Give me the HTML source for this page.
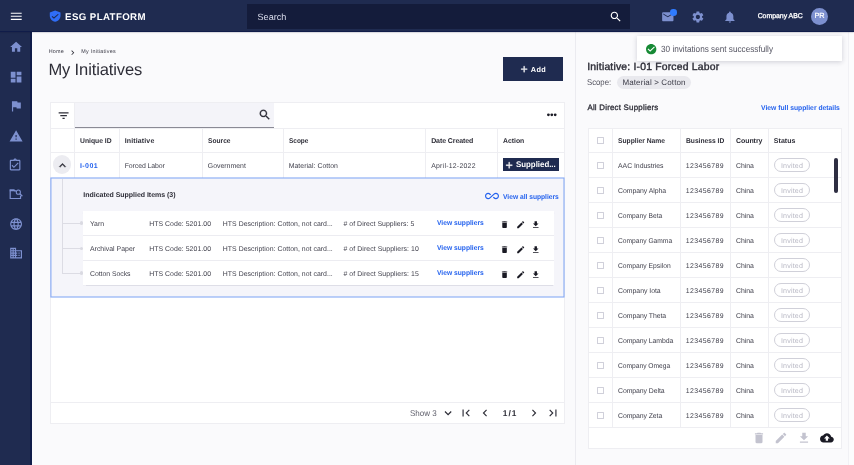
<!DOCTYPE html>
<html lang="en">
<head>
<meta charset="utf-8">
<title>ESG Platform - My Initiatives</title>
<style>
*{box-sizing:border-box;margin:0;padding:0}
html,body{width:854px;height:465px;overflow:hidden;background:#fafafc;font-family:"Liberation Sans",sans-serif;color:#2e2e38}
#app{position:relative;width:854px;height:465px;overflow:hidden;will-change:transform;text-rendering:geometricPrecision}
.a{position:absolute;display:block}
svg.a{overflow:visible}
.t{position:absolute;white-space:nowrap;line-height:1;transform-origin:0 50%}
</style>
</head>
<body>
<div id="app">
<div class="a" style="left:0.00px;top:0.00px;width:854.00px;height:465.00px;background:#fafafc;"></div>
<div class="a" style="left:576.00px;top:32.00px;width:278.00px;height:433.00px;background:#fafafc;"></div>
<div class="a" style="left:575.40px;top:32.00px;width:1.00px;height:433.00px;background:#ebebf0;"></div>
<div class="a" style="left:849.00px;top:32.00px;width:5.00px;height:433.00px;background:#fcfcfd;"></div>
<div class="a" style="left:848.00px;top:32.00px;width:1.00px;height:433.00px;background:#f1f1f5;"></div>
<div class="t" style="left:48.73px;top:49.80px;font-size:5.4px;color:#3c3c48;letter-spacing:0.198px;">Home</div>
<svg class="a" style="left:67.68px;top:47.50px" width="9.40" height="9.40" viewBox="0 0 24 24" fill="#2e2e38"><path d="M10 6L8.590 7.410 13.170 12l-4.580 4.590L10 18l6-6z"/></svg>
<div class="t" style="left:81.33px;top:49.80px;font-size:5.4px;color:#3c3c48;letter-spacing:0.241px;">My Initiatives</div>
<div class="t" style="left:48.38px;top:62.25px;font-size:16.5px;color:#2e2e38;letter-spacing:-0.113px;">My Initiatives</div>
<div class="a" style="left:503.30px;top:57.40px;width:60.20px;height:23.60px;background:#1f2b50;"></div>
<svg class="a" style="left:519.25px;top:64.25px" width="10.30" height="10.30" viewBox="0 0 24 24" fill="#fff" stroke="#fff" stroke-width="0.9"><path d="M19 13h-6v6h-2v-6H5v-2h6V5h2v6h6v2z"/></svg>
<div class="t" style="left:530.74px;top:66.35px;font-size:7.3px;color:#fff;font-weight:bold;letter-spacing:0.385px;">Add</div>
<div class="a" style="left:50.00px;top:102.00px;width:514.50px;height:321.50px;background:#fff;border:1px solid #eeeef2"></div>
<div class="a" style="left:75.00px;top:103.00px;width:199.20px;height:25.00px;background:#f4f4f9;"></div>
<svg class="a" style="left:56.50px;top:109.00px" width="13.20" height="13.20" viewBox="0 0 24 24" fill="#2e2e38"><path d="M10 18h4v-2h-4v2zM3 6v2h18V6H3zm3 7h12v-2H6v2z"/></svg>
<svg class="a" style="left:257.64px;top:107.94px" width="13.60" height="13.60" viewBox="0 0 24 24" fill="#2e2e38" stroke="#2e2e38" stroke-width="0.5"><path d="M15.5 14h-.79l-.28-.27C15.41 12.59 16 11.11 16 9.5 16 5.91 13.09 3 9.5 3S3 5.91 3 9.5 5.91 16 9.5 16c1.610 0 3.090-.590 4.230-1.570l.270.280v.790l5 4.990L20.490 19l-4.990-5zm-6 0C7.010 14 5 11.990 5 9.500S7.010 5 9.500 5 14 7.010 14 9.500 11.990 14 9.500 14z"/></svg>
<svg class="a" style="left:540px;top:108px" width="24" height="14" viewBox="0 0 24 14" fill="#1c1c26"><circle cx="8.4" cy="6.85" r="1.4"/><circle cx="11.8" cy="6.85" r="1.4"/><circle cx="15.2" cy="6.85" r="1.4"/></svg>
<div class="a" style="left:51.00px;top:127.80px;width:513.00px;height:1.00px;background:#eeeef2;"></div>
<div class="a" style="left:51.00px;top:152.20px;width:513.00px;height:1.00px;background:#eeeef2;"></div>
<div class="a" style="left:74.00px;top:103.00px;width:1.00px;height:75.00px;background:#eeeef2;"></div>
<div class="a" style="left:75.00px;top:127.00px;width:199.20px;height:1.00px;background:#8a8a95;"></div>
<div class="a" style="left:119.00px;top:128.00px;width:1.00px;height:50.00px;background:#eeeef2;"></div>
<div class="a" style="left:202.00px;top:128.00px;width:1.00px;height:50.00px;background:#eeeef2;"></div>
<div class="a" style="left:282.90px;top:128.00px;width:1.00px;height:50.00px;background:#eeeef2;"></div>
<div class="a" style="left:425.00px;top:128.00px;width:1.00px;height:50.00px;background:#eeeef2;"></div>
<div class="a" style="left:497.00px;top:128.00px;width:1.00px;height:50.00px;background:#eeeef2;"></div>
<div class="t" style="left:79.96px;top:137.50px;font-size:7px;color:#2e2e38;font-weight:bold;transform:scaleX(0.9681);">Unique ID</div>
<div class="t" style="left:124.75px;top:137.50px;font-size:7px;color:#2e2e38;font-weight:bold;letter-spacing:0.125px;">Initiative</div>
<div class="t" style="left:207.77px;top:137.50px;font-size:7px;color:#2e2e38;font-weight:bold;transform:scaleX(0.9493);">Source</div>
<div class="t" style="left:288.68px;top:137.50px;font-size:7px;color:#2e2e38;font-weight:bold;transform:scaleX(0.9246);">Scope</div>
<div class="t" style="left:431.15px;top:137.50px;font-size:7px;color:#2e2e38;font-weight:bold;letter-spacing:-0.087px;">Date Created</div>
<div class="t" style="left:502.96px;top:137.50px;font-size:7px;color:#2e2e38;font-weight:bold;transform:scaleX(0.9747);">Action</div>
<div class="a" style="left:53.00px;top:155.40px;width:18.40px;height:18.40px;background:#ececf1;border-radius:50%"></div>
<svg class="a" style="left:56.10px;top:158.66px" width="13.00" height="13.00" viewBox="0 0 24 24" fill="#2e2e38" stroke="#2e2e38" stroke-width="0.6"><path d="M12 8l-6 6 1.410 1.410L12 10.830l4.590 4.580L18 14z"/></svg>
<div class="t" style="left:79.95px;top:162.50px;font-size:7px;color:#2462ee;font-weight:bold;letter-spacing:0.440px;">I-001</div>
<div class="t" style="left:124.75px;top:163.55px;font-size:6.9px;color:#40404c;letter-spacing:-0.088px;">Forced Labor</div>
<div class="t" style="left:207.75px;top:163.55px;font-size:6.9px;color:#40404c;letter-spacing:0.022px;">Government</div>
<div class="t" style="left:288.65px;top:163.55px;font-size:6.9px;color:#40404c;letter-spacing:0.045px;">Material: Cotton</div>
<div class="t" style="left:431.15px;top:163.55px;font-size:6.9px;color:#40404c;letter-spacing:0.246px;">April-12-2022</div>
<div class="a" style="left:502.90px;top:158.30px;width:56.00px;height:13.20px;background:#1f2b50;"></div>
<svg class="a" style="left:504.40px;top:159.80px" width="10.40" height="10.40" viewBox="0 0 24 24" fill="#fff" stroke="#fff" stroke-width="0.9"><path d="M19 13h-6v6h-2v-6H5v-2h6V5h2v6h6v2z"/></svg>
<div class="t" style="left:515.81px;top:160.90px;font-size:8.2px;color:#fff;font-weight:bold;transform:scaleX(0.9597);">Supplied...</div>
<div class="a" style="left:51.00px;top:178.00px;width:513.00px;height:119.00px;background:#f5f5fa;"></div>
<svg class="a" style="left:0;top:0" width="854" height="465" fill="none" stroke="#85a9f5" stroke-width="1.1"><rect x="50.9" y="178" width="513.1" height="119"/></svg>
<div class="a" style="left:62.00px;top:178.70px;width:1.00px;height:94.50px;background:#dcdce4;"></div>
<div class="a" style="left:62.00px;top:222.50px;width:19.00px;height:1.00px;background:#dcdce4;"></div>
<div class="a" style="left:80.00px;top:221.30px;width:3.40px;height:3.40px;background:#dadae2;border-radius:50%"></div>
<div class="a" style="left:62.00px;top:247.70px;width:19.00px;height:1.00px;background:#dcdce4;"></div>
<div class="a" style="left:80.00px;top:246.50px;width:3.40px;height:3.40px;background:#dadae2;border-radius:50%"></div>
<div class="a" style="left:62.00px;top:272.50px;width:19.00px;height:1.00px;background:#dcdce4;"></div>
<div class="a" style="left:80.00px;top:271.30px;width:3.40px;height:3.40px;background:#dadae2;border-radius:50%"></div>
<div class="t" style="left:83.35px;top:191.50px;font-size:7px;color:#2e2e38;font-weight:bold;letter-spacing:-0.031px;">Indicated Supplied Items (3)</div>
<svg class="a" style="left:484.90px;top:189.30px" width="14.00" height="14.00" viewBox="0 0 24 24" fill="#2462ee"><path d="M18.600 6.620c-1.440 0-2.800.560-3.770 1.530L12 10.660 10.480 12h.010L7.800 14.390c-.640.640-1.490.990-2.400.990-1.870 0-3.390-1.510-3.390-3.380S3.530 8.620 5.400 8.620c.910 0 1.760.350 2.440 1.030l1.130 1 1.510-1.340L9.220 8.200C8.200 7.180 6.840 6.620 5.400 6.620 2.420 6.620 0 9.040 0 12s2.420 5.380 5.400 5.380c1.440 0 2.800-.560 3.770-1.530l2.830-2.500.010.010L13.520 12h-.010l2.690-2.390c.640-.640 1.490-.990 2.400-.990 1.870 0 3.390 1.510 3.390 3.380s-1.520 3.380-3.390 3.380c-.900 0-1.760-.350-2.440-1.030l-1.140-1.010-1.510 1.340 1.270 1.120c1.020 1.010 2.370 1.570 3.820 1.570 2.980 0 5.400-2.410 5.400-5.380s-2.420-5.370-5.400-5.370z"/></svg>
<div class="t" style="left:502.67px;top:193.50px;font-size:7px;color:#2462ee;font-weight:bold;transform:scaleX(0.9523);">View all suppliers</div>
<div class="a" style="left:82.50px;top:210.70px;width:471.60px;height:74.50px;background:#fff;box-shadow:0 .5px .8px rgba(60,60,100,.12)"></div>
<div class="a" style="left:82.50px;top:235.20px;width:471.60px;height:1.00px;background:#ececf1;"></div>
<div class="a" style="left:82.50px;top:260.00px;width:471.60px;height:1.00px;background:#ececf1;"></div>
<div class="t" style="left:89.95px;top:221.55px;font-size:6.9px;color:#40404c;letter-spacing:0.025px;">Yarn</div>
<div class="t" style="left:149.16px;top:221.55px;font-size:6.9px;color:#40404c;letter-spacing:0.057px;">HTS Code: 5201.00</div>
<div class="t" style="left:222.85px;top:221.55px;font-size:6.9px;color:#40404c;letter-spacing:0.033px;">HTS Description: Cotton, not card...</div>
<div class="t" style="left:343.45px;top:221.55px;font-size:6.9px;color:#40404c;letter-spacing:0.052px;"># of Direct Suppliers: 5</div>
<div class="t" style="left:437.17px;top:219.50px;font-size:7px;color:#2462ee;font-weight:bold;transform:scaleX(0.9558);">View suppliers</div>
<svg class="a" style="left:500.25px;top:219.85px" width="9.10" height="9.10" viewBox="0 0 24 24" fill="#1a1a24"><path d="M6 19c0 1.100.900 2 2 2h8c1.100 0 2-.900 2-2V7H6v12zM19 4h-3.500l-1-1h-5l-1 1H5v2h14V4z"/></svg>
<svg class="a" style="left:515.60px;top:219.80px" width="9.40" height="9.40" viewBox="0 0 24 24" fill="#1a1a24"><path d="M3 17.250V21h3.750L17.810 9.940l-3.750-3.750L3 17.250zM20.710 7.040c.390-.390.390-1.020 0-1.410l-2.340-2.340c-.390-.390-1.020-.390-1.410 0l-1.830 1.830 3.750 3.750 1.830-1.830z"/></svg>
<svg class="a" style="left:531.45px;top:220.05px" width="9.50" height="9.50" viewBox="0 0 24 24" fill="#1a1a24"><path d="M19 9h-4V3H9v6H5l7 7 7-7zM5 18v2h14v-2H5z"/></svg>
<div class="t" style="left:89.95px;top:246.55px;font-size:6.9px;color:#40404c;letter-spacing:0.024px;">Archival Paper</div>
<div class="t" style="left:149.16px;top:246.55px;font-size:6.9px;color:#40404c;letter-spacing:0.057px;">HTS Code: 5201.00</div>
<div class="t" style="left:222.85px;top:246.55px;font-size:6.9px;color:#40404c;letter-spacing:0.033px;">HTS Description: Cotton, not card...</div>
<div class="t" style="left:343.45px;top:246.55px;font-size:6.9px;color:#40404c;letter-spacing:0.078px;"># of Direct Suppliers: 10</div>
<div class="t" style="left:437.17px;top:244.50px;font-size:7px;color:#2462ee;font-weight:bold;transform:scaleX(0.9558);">View suppliers</div>
<svg class="a" style="left:500.25px;top:244.85px" width="9.10" height="9.10" viewBox="0 0 24 24" fill="#1a1a24"><path d="M6 19c0 1.100.900 2 2 2h8c1.100 0 2-.900 2-2V7H6v12zM19 4h-3.500l-1-1h-5l-1 1H5v2h14V4z"/></svg>
<svg class="a" style="left:515.60px;top:244.80px" width="9.40" height="9.40" viewBox="0 0 24 24" fill="#1a1a24"><path d="M3 17.250V21h3.750L17.810 9.940l-3.750-3.750L3 17.250zM20.710 7.040c.390-.390.390-1.020 0-1.410l-2.340-2.340c-.390-.390-1.020-.390-1.410 0l-1.830 1.830 3.750 3.750 1.830-1.830z"/></svg>
<svg class="a" style="left:531.45px;top:245.05px" width="9.50" height="9.50" viewBox="0 0 24 24" fill="#1a1a24"><path d="M19 9h-4V3H9v6H5l7 7 7-7zM5 18v2h14v-2H5z"/></svg>
<div class="t" style="left:89.95px;top:271.55px;font-size:6.9px;color:#40404c;letter-spacing:-0.033px;">Cotton Socks</div>
<div class="t" style="left:149.16px;top:271.55px;font-size:6.9px;color:#40404c;letter-spacing:0.057px;">HTS Code: 5201.00</div>
<div class="t" style="left:222.85px;top:271.55px;font-size:6.9px;color:#40404c;letter-spacing:0.033px;">HTS Description: Cotton, not card...</div>
<div class="t" style="left:343.45px;top:271.55px;font-size:6.9px;color:#40404c;letter-spacing:0.078px;"># of Direct Suppliers: 15</div>
<div class="t" style="left:437.17px;top:269.50px;font-size:7px;color:#2462ee;font-weight:bold;transform:scaleX(0.9558);">View suppliers</div>
<svg class="a" style="left:500.25px;top:269.75px" width="9.10" height="9.10" viewBox="0 0 24 24" fill="#1a1a24"><path d="M6 19c0 1.100.900 2 2 2h8c1.100 0 2-.900 2-2V7H6v12zM19 4h-3.500l-1-1h-5l-1 1H5v2h14V4z"/></svg>
<svg class="a" style="left:515.60px;top:269.70px" width="9.40" height="9.40" viewBox="0 0 24 24" fill="#1a1a24"><path d="M3 17.250V21h3.750L17.810 9.940l-3.750-3.750L3 17.250zM20.710 7.040c.390-.390.390-1.020 0-1.410l-2.340-2.340c-.390-.390-1.020-.390-1.410 0l-1.830 1.830 3.750 3.750 1.830-1.830z"/></svg>
<svg class="a" style="left:531.45px;top:269.95px" width="9.50" height="9.50" viewBox="0 0 24 24" fill="#1a1a24"><path d="M19 9h-4V3H9v6H5l7 7 7-7zM5 18v2h14v-2H5z"/></svg>
<div class="a" style="left:51.00px;top:402.30px;width:513.00px;height:1.00px;background:#eeeef2;"></div>
<div class="t" style="left:409.60px;top:409.35px;font-size:8.3px;color:#5f5f6b;transform:scaleX(0.9660);">Show 3</div>
<svg class="a" style="left:441.10px;top:405.92px" width="14.20" height="14.20" viewBox="0 0 24 24" fill="#2e2e38"><path d="M16.590 8.590L12 13.170 7.410 8.590 6 10l6 6 6-6z"/></svg>
<svg class="a" style="left:459.08px;top:406.10px" width="14.00" height="14.00" viewBox="0 0 24 24" fill="#2e2e38"><path d="M18.410 16.590L13.820 12l4.590-4.590L17 6l-6 6 6 6zM6 6h2v12H6z"/></svg>
<svg class="a" style="left:477.78px;top:406.10px" width="14.00" height="14.00" viewBox="0 0 24 24" fill="#2e2e38"><path d="M15.410 7.410L14 6l-6 6 6 6 1.410-1.410L10.830 12z"/></svg>
<div class="t" style="left:502.78px;top:409.35px;font-size:8.3px;color:#2e2e38;font-weight:bold;letter-spacing:1.000px;">1/1</div>
<svg class="a" style="left:527.03px;top:406.10px" width="14.00" height="14.00" viewBox="0 0 24 24" fill="#2e2e38"><path d="M10 6L8.590 7.410 13.170 12l-4.580 4.590L10 18l6-6z"/></svg>
<svg class="a" style="left:545.62px;top:406.10px" width="14.00" height="14.00" viewBox="0 0 24 24" fill="#2e2e38"><path d="M5.590 7.410L10.180 12l-4.590 4.590L7 18l6-6-6-6zM16 6h2v12h-2z"/></svg>
<div class="t" style="left:587.28px;top:62.80px;font-size:10.4px;color:#2e2e38;letter-spacing:0.191px;-webkit-text-stroke:.4px #2e2e38">Initiative: I-01 Forced Labor</div>
<div class="t" style="left:587.41px;top:78.30px;font-size:8.4px;color:#50505c;transform:scaleX(0.9263);">Scope:</div>
<div class="a" style="left:617.30px;top:76.00px;width:73.60px;height:13.20px;background:#e9e9ee;border-radius:6.6px"></div>
<div class="t" style="left:622.40px;top:79.00px;font-size:8px;color:#3c3c48;letter-spacing:0.124px;">Material &gt; Cotton</div>
<div class="t" style="left:587.40px;top:104.05px;font-size:7.9px;color:#2e2e38;letter-spacing:0.224px;-webkit-text-stroke:.3px #2e2e38">All Direct Suppliers</div>
<div class="t" style="left:761.26px;top:104.50px;font-size:7px;color:#2462ee;font-weight:bold;transform:scaleX(0.9665);">View full supplier details</div>
<div class="a" style="left:588.00px;top:128.00px;width:254.00px;height:321.00px;background:#fff;border:1px solid #eeeef2"></div>
<div class="a" style="left:611.70px;top:128.50px;width:1.00px;height:299.00px;background:#eeeef2;"></div>
<div class="a" style="left:679.70px;top:128.50px;width:1.00px;height:299.00px;background:#eeeef2;"></div>
<div class="a" style="left:729.80px;top:128.50px;width:1.00px;height:299.00px;background:#eeeef2;"></div>
<div class="a" style="left:768.10px;top:128.50px;width:1.00px;height:299.00px;background:#eeeef2;"></div>
<div class="t" style="left:618.06px;top:137.50px;font-size:7px;color:#2e2e38;font-weight:bold;transform:scaleX(0.9595);">Supplier Name</div>
<div class="t" style="left:685.67px;top:137.50px;font-size:7px;color:#2e2e38;font-weight:bold;transform:scaleX(0.9539);">Business ID</div>
<div class="t" style="left:735.95px;top:137.50px;font-size:7px;color:#2e2e38;font-weight:bold;letter-spacing:-0.052px;">Country</div>
<div class="t" style="left:773.85px;top:137.50px;font-size:7px;color:#2e2e38;font-weight:bold;letter-spacing:0.025px;">Status</div>
<div class="a" style="left:597.10px;top:137.00px;width:6.80px;height:6.80px;background:#fff;border:1px solid #d0d0da;border-radius:.5px"></div>
<div class="a" style="left:589.00px;top:151.80px;width:252.00px;height:1.00px;background:#eeeef2;"></div>
<div class="a" style="left:597.10px;top:161.90px;width:6.80px;height:6.80px;background:#fff;border:1px solid #d0d0da;border-radius:.5px"></div>
<div class="t" style="left:618.05px;top:163.55px;font-size:6.9px;color:#40404c;letter-spacing:-0.034px;">AAC Industries</div>
<div class="t" style="left:685.65px;top:163.55px;font-size:6.9px;color:#40404c;letter-spacing:0.428px;">123456789</div>
<div class="t" style="left:735.95px;top:163.55px;font-size:6.9px;color:#40404c;letter-spacing:-0.024px;">China</div>
<div class="a" style="left:774.00px;top:158.10px;width:36.00px;height:14.00px;background:#fff;border:1px solid #d0d0d9;border-radius:7px"></div>
<div class="t" style="left:780.94px;top:162.95px;font-size:7.1px;color:#b8b8c4;letter-spacing:0.172px;">Invited</div>
<div class="a" style="left:589.00px;top:176.80px;width:252.00px;height:1.00px;background:#eeeef2;"></div>
<div class="a" style="left:597.10px;top:186.90px;width:6.80px;height:6.80px;background:#fff;border:1px solid #d0d0da;border-radius:.5px"></div>
<div class="t" style="left:618.05px;top:188.55px;font-size:6.9px;color:#40404c;letter-spacing:-0.053px;">Company Alpha</div>
<div class="t" style="left:685.65px;top:188.55px;font-size:6.9px;color:#40404c;letter-spacing:0.428px;">123456789</div>
<div class="t" style="left:735.95px;top:188.55px;font-size:6.9px;color:#40404c;letter-spacing:-0.024px;">China</div>
<div class="a" style="left:774.00px;top:183.10px;width:36.00px;height:14.00px;background:#fff;border:1px solid #d0d0d9;border-radius:7px"></div>
<div class="t" style="left:780.94px;top:187.95px;font-size:7.1px;color:#b8b8c4;letter-spacing:0.172px;">Invited</div>
<div class="a" style="left:589.00px;top:201.80px;width:252.00px;height:1.00px;background:#eeeef2;"></div>
<div class="a" style="left:597.10px;top:211.90px;width:6.80px;height:6.80px;background:#fff;border:1px solid #d0d0da;border-radius:.5px"></div>
<div class="t" style="left:618.07px;top:213.55px;font-size:6.9px;color:#40404c;transform:scaleX(0.9699);">Company Beta</div>
<div class="t" style="left:685.65px;top:213.55px;font-size:6.9px;color:#40404c;letter-spacing:0.428px;">123456789</div>
<div class="t" style="left:735.95px;top:213.55px;font-size:6.9px;color:#40404c;letter-spacing:-0.024px;">China</div>
<div class="a" style="left:774.00px;top:208.10px;width:36.00px;height:14.00px;background:#fff;border:1px solid #d0d0d9;border-radius:7px"></div>
<div class="t" style="left:780.94px;top:212.95px;font-size:7.1px;color:#b8b8c4;letter-spacing:0.172px;">Invited</div>
<div class="a" style="left:589.00px;top:226.80px;width:252.00px;height:1.00px;background:#eeeef2;"></div>
<div class="a" style="left:597.10px;top:236.90px;width:6.80px;height:6.80px;background:#fff;border:1px solid #d0d0da;border-radius:.5px"></div>
<div class="t" style="left:618.07px;top:238.55px;font-size:6.9px;color:#40404c;transform:scaleX(0.9678);">Company Gamma</div>
<div class="t" style="left:685.65px;top:238.55px;font-size:6.9px;color:#40404c;letter-spacing:0.428px;">123456789</div>
<div class="t" style="left:735.95px;top:238.55px;font-size:6.9px;color:#40404c;letter-spacing:-0.024px;">China</div>
<div class="a" style="left:774.00px;top:233.10px;width:36.00px;height:14.00px;background:#fff;border:1px solid #d0d0d9;border-radius:7px"></div>
<div class="t" style="left:780.94px;top:237.95px;font-size:7.1px;color:#b8b8c4;letter-spacing:0.172px;">Invited</div>
<div class="a" style="left:589.00px;top:251.80px;width:252.00px;height:1.00px;background:#eeeef2;"></div>
<div class="a" style="left:597.10px;top:261.90px;width:6.80px;height:6.80px;background:#fff;border:1px solid #d0d0da;border-radius:.5px"></div>
<div class="t" style="left:618.06px;top:263.55px;font-size:6.9px;color:#40404c;transform:scaleX(0.9742);">Company Epsilon</div>
<div class="t" style="left:685.65px;top:263.55px;font-size:6.9px;color:#40404c;letter-spacing:0.428px;">123456789</div>
<div class="t" style="left:735.95px;top:263.55px;font-size:6.9px;color:#40404c;letter-spacing:-0.024px;">China</div>
<div class="a" style="left:774.00px;top:258.10px;width:36.00px;height:14.00px;background:#fff;border:1px solid #d0d0d9;border-radius:7px"></div>
<div class="t" style="left:780.94px;top:262.95px;font-size:7.1px;color:#b8b8c4;letter-spacing:0.172px;">Invited</div>
<div class="a" style="left:589.00px;top:276.80px;width:252.00px;height:1.00px;background:#eeeef2;"></div>
<div class="a" style="left:597.10px;top:286.90px;width:6.80px;height:6.80px;background:#fff;border:1px solid #d0d0da;border-radius:.5px"></div>
<div class="t" style="left:618.05px;top:288.55px;font-size:6.9px;color:#40404c;letter-spacing:-0.026px;">Company Iota</div>
<div class="t" style="left:685.65px;top:288.55px;font-size:6.9px;color:#40404c;letter-spacing:0.428px;">123456789</div>
<div class="t" style="left:735.95px;top:288.55px;font-size:6.9px;color:#40404c;letter-spacing:-0.024px;">China</div>
<div class="a" style="left:774.00px;top:283.10px;width:36.00px;height:14.00px;background:#fff;border:1px solid #d0d0d9;border-radius:7px"></div>
<div class="t" style="left:780.94px;top:287.95px;font-size:7.1px;color:#b8b8c4;letter-spacing:0.172px;">Invited</div>
<div class="a" style="left:589.00px;top:301.80px;width:252.00px;height:1.00px;background:#eeeef2;"></div>
<div class="a" style="left:597.10px;top:311.90px;width:6.80px;height:6.80px;background:#fff;border:1px solid #d0d0da;border-radius:.5px"></div>
<div class="t" style="left:618.05px;top:313.55px;font-size:6.9px;color:#40404c;letter-spacing:-0.065px;">Company Theta</div>
<div class="t" style="left:685.65px;top:313.55px;font-size:6.9px;color:#40404c;letter-spacing:0.428px;">123456789</div>
<div class="t" style="left:735.95px;top:313.55px;font-size:6.9px;color:#40404c;letter-spacing:-0.024px;">China</div>
<div class="a" style="left:774.00px;top:308.10px;width:36.00px;height:14.00px;background:#fff;border:1px solid #d0d0d9;border-radius:7px"></div>
<div class="t" style="left:780.94px;top:312.95px;font-size:7.1px;color:#b8b8c4;letter-spacing:0.172px;">Invited</div>
<div class="a" style="left:589.00px;top:326.80px;width:252.00px;height:1.00px;background:#eeeef2;"></div>
<div class="a" style="left:597.10px;top:336.90px;width:6.80px;height:6.80px;background:#fff;border:1px solid #d0d0da;border-radius:.5px"></div>
<div class="t" style="left:618.05px;top:338.55px;font-size:6.9px;color:#40404c;letter-spacing:-0.084px;">Company Lambda</div>
<div class="t" style="left:685.65px;top:338.55px;font-size:6.9px;color:#40404c;letter-spacing:0.428px;">123456789</div>
<div class="t" style="left:735.95px;top:338.55px;font-size:6.9px;color:#40404c;letter-spacing:-0.024px;">China</div>
<div class="a" style="left:774.00px;top:333.10px;width:36.00px;height:14.00px;background:#fff;border:1px solid #d0d0d9;border-radius:7px"></div>
<div class="t" style="left:780.94px;top:337.95px;font-size:7.1px;color:#b8b8c4;letter-spacing:0.172px;">Invited</div>
<div class="a" style="left:589.00px;top:351.80px;width:252.00px;height:1.00px;background:#eeeef2;"></div>
<div class="a" style="left:597.10px;top:361.90px;width:6.80px;height:6.80px;background:#fff;border:1px solid #d0d0da;border-radius:.5px"></div>
<div class="t" style="left:618.07px;top:363.55px;font-size:6.9px;color:#40404c;transform:scaleX(0.9668);">Company Omega</div>
<div class="t" style="left:685.65px;top:363.55px;font-size:6.9px;color:#40404c;letter-spacing:0.428px;">123456789</div>
<div class="t" style="left:735.95px;top:363.55px;font-size:6.9px;color:#40404c;letter-spacing:-0.024px;">China</div>
<div class="a" style="left:774.00px;top:358.10px;width:36.00px;height:14.00px;background:#fff;border:1px solid #d0d0d9;border-radius:7px"></div>
<div class="t" style="left:780.94px;top:362.95px;font-size:7.1px;color:#b8b8c4;letter-spacing:0.172px;">Invited</div>
<div class="a" style="left:589.00px;top:376.80px;width:252.00px;height:1.00px;background:#eeeef2;"></div>
<div class="a" style="left:597.10px;top:386.90px;width:6.80px;height:6.80px;background:#fff;border:1px solid #d0d0da;border-radius:.5px"></div>
<div class="t" style="left:618.05px;top:388.55px;font-size:6.9px;color:#40404c;letter-spacing:-0.082px;">Company Delta</div>
<div class="t" style="left:685.65px;top:388.55px;font-size:6.9px;color:#40404c;letter-spacing:0.428px;">123456789</div>
<div class="t" style="left:735.95px;top:388.55px;font-size:6.9px;color:#40404c;letter-spacing:-0.024px;">China</div>
<div class="a" style="left:774.00px;top:383.10px;width:36.00px;height:14.00px;background:#fff;border:1px solid #d0d0d9;border-radius:7px"></div>
<div class="t" style="left:780.94px;top:387.95px;font-size:7.1px;color:#b8b8c4;letter-spacing:0.172px;">Invited</div>
<div class="a" style="left:589.00px;top:401.80px;width:252.00px;height:1.00px;background:#eeeef2;"></div>
<div class="a" style="left:597.10px;top:411.90px;width:6.80px;height:6.80px;background:#fff;border:1px solid #d0d0da;border-radius:.5px"></div>
<div class="t" style="left:618.05px;top:413.55px;font-size:6.9px;color:#40404c;letter-spacing:-0.089px;">Company Zeta</div>
<div class="t" style="left:685.65px;top:413.55px;font-size:6.9px;color:#40404c;letter-spacing:0.428px;">123456789</div>
<div class="t" style="left:735.95px;top:413.55px;font-size:6.9px;color:#40404c;letter-spacing:-0.024px;">China</div>
<div class="a" style="left:774.00px;top:408.10px;width:36.00px;height:14.00px;background:#fff;border:1px solid #d0d0d9;border-radius:7px"></div>
<div class="t" style="left:780.94px;top:412.95px;font-size:7.1px;color:#b8b8c4;letter-spacing:0.172px;">Invited</div>
<div class="a" style="left:589.00px;top:426.80px;width:252.00px;height:1.00px;background:#eeeef2;"></div>
<div class="a" style="left:833.90px;top:158.40px;width:4.50px;height:34.30px;background:#2e2e42;border-radius:2.3px"></div>
<svg class="a" style="left:751.50px;top:431.00px" width="14.00" height="14.00" viewBox="0 0 24 24" fill="#c3c3cf"><path d="M6 19c0 1.100.900 2 2 2h8c1.100 0 2-.900 2-2V7H6v12zM19 4h-3.500l-1-1h-5l-1 1H5v2h14V4z"/></svg>
<svg class="a" style="left:774.10px;top:431.00px" width="14.00" height="14.00" viewBox="0 0 24 24" fill="#c3c3cf"><path d="M3 17.250V21h3.750L17.810 9.940l-3.750-3.750L3 17.250zM20.710 7.040c.390-.390.390-1.020 0-1.410l-2.340-2.340c-.390-.390-1.020-.390-1.410 0l-1.830 1.830 3.750 3.750 1.830-1.830z"/></svg>
<svg class="a" style="left:796.80px;top:431.29px" width="14.00" height="14.00" viewBox="0 0 24 24" fill="#c3c3cf"><path d="M19 9h-4V3H9v6H5l7 7 7-7zM5 18v2h14v-2H5z"/></svg>
<svg class="a" style="left:819.70px;top:431.20px" width="13.80" height="13.80" viewBox="0 0 24 24" fill="#1a1a24"><path d="M19.350 10.040C18.670 6.590 15.640 4 12 4 9.110 4 6.600 5.640 5.350 8.040 2.340 8.360 0 10.910 0 14c0 3.310 2.690 6 6 6h13c2.760 0 5-2.240 5-5 0-2.640-2.050-4.780-4.650-4.960zM14 13v4h-4v-4H7l5-5 5 5h-3z"/></svg>
<div class="a" style="left:637.00px;top:36.40px;width:204.70px;height:24.80px;background:#fff;box-shadow:0 1px 5px rgba(30,30,60,.2)"></div>
<svg class="a" style="left:644.80px;top:42.90px" width="12.40" height="12.40" viewBox="0 0 24 24" fill="#178a35"><path d="M12 2C6.480 2 2 6.480 2 12s4.480 10 10 10 10-4.480 10-10S17.520 2 12 2zm-2 15l-5-5 1.410-1.410L10 14.170l7.590-7.590L19 8l-9 9z"/></svg>
<div class="t" style="left:661.09px;top:45.00px;font-size:9px;color:#555562;transform:scaleX(0.9102);">30 invitations sent successfully</div>
<div class="a" style="left:0.00px;top:32.00px;width:32.00px;height:433.00px;background:#1f2b50;background:linear-gradient(to right,#1f2b50 29.7px,#101c49 30.3px,#101c49 31.5px,#8088a4 32px)"></div>
<div class="a" style="left:0.00px;top:0.00px;width:854.00px;height:32.00px;background:#1f2b50;background:linear-gradient(to bottom,#1f2b50 30.6px,#101c49 31.1px,#101c49 32px);box-shadow:0 0.5px 1.5px rgba(10,15,40,.35)"></div>
<svg class="a" style="left:8.85px;top:8.85px" width="14.50" height="14.50" viewBox="0 0 24 24" fill="#fff"><path d="M3 18h18v-2H3v2zm0-5h18v-2H3v2zm0-7v2h18V6H3z"/></svg>
<svg class="a" style="left:47.85px;top:9.75px" width="14.30" height="12.30" viewBox="0 0 24 24" preserveAspectRatio="none" fill="#2f6df6"><path d="M12 1L3 5v6c0 5.550 3.840 10.740 9 12 5.160-1.260 9-6.450 9-12V5l-9-4zm-2 16l-4-4 1.410-1.410L10 14.170l6.590-6.590L18 9l-8 8z"/></svg>
<div class="t" style="left:65.11px;top:13.15px;font-size:9.7px;color:#fff;font-weight:bold;letter-spacing:0.384px;">ESG PLATFORM</div>
<div class="a" style="left:247.00px;top:3.50px;width:383.00px;height:25.00px;background:#141c3b;"></div>
<div class="t" style="left:257.55px;top:12.95px;font-size:9.1px;color:#d9dcec;">Search</div>
<svg class="a" style="left:608.74px;top:10.24px" width="13.60" height="13.60" viewBox="0 0 24 24" fill="#fff"><path d="M15.5 14h-.79l-.28-.27C15.41 12.59 16 11.11 16 9.5 16 5.91 13.09 3 9.5 3S3 5.91 3 9.5 5.91 16 9.5 16c1.610 0 3.090-.590 4.230-1.570l.270.280v.790l5 4.990L20.490 19l-4.990-5zm-6 0C7.010 14 5 11.990 5 9.500S7.010 5 9.500 5 14 7.010 14 9.500 11.990 14 9.500 14z"/></svg>
<svg class="a" style="left:661.40px;top:9.80px" width="13.60" height="13.60" viewBox="0 0 24 24" fill="#7d90cf"><path d="M20 4H4c-1.100 0-1.990.900-1.990 2L2 18c0 1.100.900 2 2 2h16c1.100 0 2-.900 2-2V6c0-1.100-.900-2-2-2zm0 4l-8 5-8-5V6l8 5 8-5v2z"/></svg>
<div class="a" style="left:670.40px;top:9.30px;width:6.30px;height:6.30px;background:#2f7bff;border-radius:50%"></div>
<svg class="a" style="left:691.30px;top:9.80px" width="13.80" height="13.80" viewBox="0 0 24 24" fill="#7d90cf"><path d="M19.140 12.940c.040-.300.060-.610.060-.940 0-.320-.020-.640-.070-.940l2.030-1.580c.180-.140.230-.410.120-.610l-1.920-3.320c-.120-.220-.370-.290-.590-.220l-2.390.960c-.500-.380-1.030-.700-1.620-.940l-.360-2.540c-.040-.240-.240-.410-.480-.410h-3.840c-.240 0-.430.170-.470.410l-.360 2.540c-.590.240-1.130.570-1.620.940l-2.390-.960c-.220-.080-.470 0-.590.220L2.740 8.870c-.120.210-.080.470.120.610l2.030 1.580c-.050.300-.090.630-.090.940s.020.640.070.940l-2.030 1.580c-.180.140-.230.410-.120.610l1.920 3.320c.120.220.370.290.590.220l2.390-.960c.500.380 1.030.700 1.620.940l.360 2.540c.050.240.240.410.480.410h3.840c.240 0 .440-.170.470-.410l.360-2.540c.590-.240 1.130-.560 1.620-.940l2.390.960c.220.080.470 0 .590-.220l1.920-3.320c.120-.220.070-.470-.120-.610l-2.010-1.580zM12 15.600c-1.980 0-3.600-1.620-3.600-3.600s1.620-3.600 3.600-3.600 3.600 1.620 3.600 3.600-1.620 3.600-3.600 3.600z"/></svg>
<svg class="a" style="left:722.90px;top:9.76px" width="13.80" height="13.80" viewBox="0 0 24 24" fill="#7d90cf"><path d="M12 22c1.100 0 2-.900 2-2h-4c0 1.100.890 2 2 2zm6-6v-5c0-3.070-1.640-5.640-4.500-6.320V4c0-.830-.670-1.500-1.500-1.500s-1.500.670-1.500 1.500v.680C7.630 5.360 6 7.920 6 11v5l-2 2v1h16v-1l-2-2z"/></svg>
<div class="t" style="left:757.65px;top:13.55px;font-size:6.9px;color:#fff;letter-spacing:-0.008px;-webkit-text-stroke:.3px #fff">Company ABC</div>
<div class="a" style="left:811.20px;top:7.50px;width:17.00px;height:17.00px;background:#7d90cf;border-radius:50%"></div>
<div class="t" style="left:814.43px;top:12.30px;font-size:7.4px;color:#fff;letter-spacing:-0.015px;-webkit-text-stroke:.2px #fff">PR</div>
<svg class="a" style="left:8.80px;top:39.95px" width="14.20" height="14.20" viewBox="0 0 24 24" fill="#7d90cf"><path d="M10 20v-6h4v6h5v-8h3L12 3 2 12h3v8z"/></svg>
<svg class="a" style="left:8.80px;top:69.50px" width="14.20" height="14.20" viewBox="0 0 24 24" fill="#7d90cf"><path d="M3 13h8V3H3v10zm0 8h8v-6H3v6zm10 0h8V11h-8v10zm0-18v6h8V3h-8z"/></svg>
<svg class="a" style="left:8.50px;top:98.60px" width="14.20" height="14.20" viewBox="0 0 24 24" fill="#7d90cf"><path d="M14.400 6L14 4H5v17h2v-7h5.600l.400 2h7V6z"/></svg>
<svg class="a" style="left:8.80px;top:128.80px" width="14.20" height="14.20" viewBox="0 0 24 24" fill="#7d90cf"><path d="M1 21h22L12 2 1 21zm12-3h-2v-2h2v2zm0-4h-2v-4h2v4z"/></svg>
<svg class="a" style="left:8.40px;top:158.39px" width="14.20" height="14.20" viewBox="0 0 24 24" fill="#7d90cf"><path d="M18 9l-1.400-1.400-6.600 6.600-2.600-2.600L6 13l4 4zm1-6h-4.180C14.400 1.840 13.300 1 12 1c-1.300 0-2.400.840-2.820 2H5c-1.100 0-2 .900-2 2v14c0 1.100.900 2 2 2h14c1.100 0 2-.900 2-2V5c0-1.100-.900-2-2-2zm-7-.250c.410 0 .750.340.750.750s-.340.750-.750.750-.750-.340-.750-.750.340-.750.750-.750zM19 19H5V5h14v14z"/></svg>
<svg class="a" style="left:8.80px;top:216.90px" width="14.20" height="14.20" viewBox="0 0 24 24" fill="#7d90cf"><path d="M11.990 2C6.470 2 2 6.480 2 12s4.470 10 9.990 10C17.520 22 22 17.520 22 12S17.520 2 11.990 2zm6.930 6h-2.950c-.320-1.250-.780-2.450-1.380-3.560 1.840.630 3.370 1.910 4.330 3.560zM12 4.040c.830 1.200 1.480 2.530 1.910 3.960h-3.820c.430-1.430 1.080-2.760 1.910-3.960zM4.260 14C4.100 13.360 4 12.690 4 12s.100-1.360.260-2h3.380c-.080.660-.140 1.320-.140 2 0 .680.060 1.340.140 2H4.260zm.820 2h2.950c.320 1.250.780 2.450 1.380 3.560-1.840-.630-3.370-1.900-4.330-3.560zm2.950-8H5.080c.960-1.660 2.490-2.930 4.330-3.560C8.810 5.550 8.350 6.750 8.030 8zM12 19.960c-.830-1.200-1.480-2.530-1.910-3.960h3.820c-.430 1.430-1.080 2.760-1.910 3.960zM14.340 14H9.660c-.090-.660-.160-1.320-.160-2 0-.680.070-1.350.160-2h4.680c.090.650.160 1.320.160 2 0 .680-.070 1.340-.160 2zm.250 5.560c.600-1.110 1.060-2.310 1.380-3.560h2.950c-.960 1.650-2.490 2.930-4.330 3.560zM16.360 14c.080-.660.140-1.320.140-2 0-.680-.060-1.340-.140-2h3.380c.160.640.260 1.310.260 2s-.100 1.360-.260 2h-3.380z"/></svg>
<svg class="a" style="left:8.80px;top:246.10px" width="14.20" height="14.20" viewBox="0 0 24 24" fill="#7d90cf"><path d="M12 7V3H2v18h20V7H12zM6 19H4v-2h2v2zm0-4H4v-2h2v2zm0-4H4V9h2v2zm0-4H4V5h2v2zm4 12H8v-2h2v2zm0-4H8v-2h2v2zm0-4H8V9h2v2zm0-4H8V5h2v2zm10 12h-8v-2h2v-2h-2v-2h2v-2h-2V9h8v10zm-2-8h-2v2h2v-2zm0 4h-2v2h2v-2z"/></svg>
<svg class="a" style="left:8.94px;top:187.15px" width="14.2" height="14.2" viewBox="0 0 24 24" fill="none" stroke="#7d90cf" stroke-width="2"><path d="M2 6v13.500h17.500v-4.500M9 6.500h3"/><path d="M1 4h8l2 2.500v.500H1z" fill="#7d90cf" stroke="none"/><circle cx="15.800" cy="8.700" r="3.500" stroke-width="1.800"/><path d="M18.300 11.300l4.300 4.300" stroke-width="2.200"/></svg>
</div>
</body>
</html>
